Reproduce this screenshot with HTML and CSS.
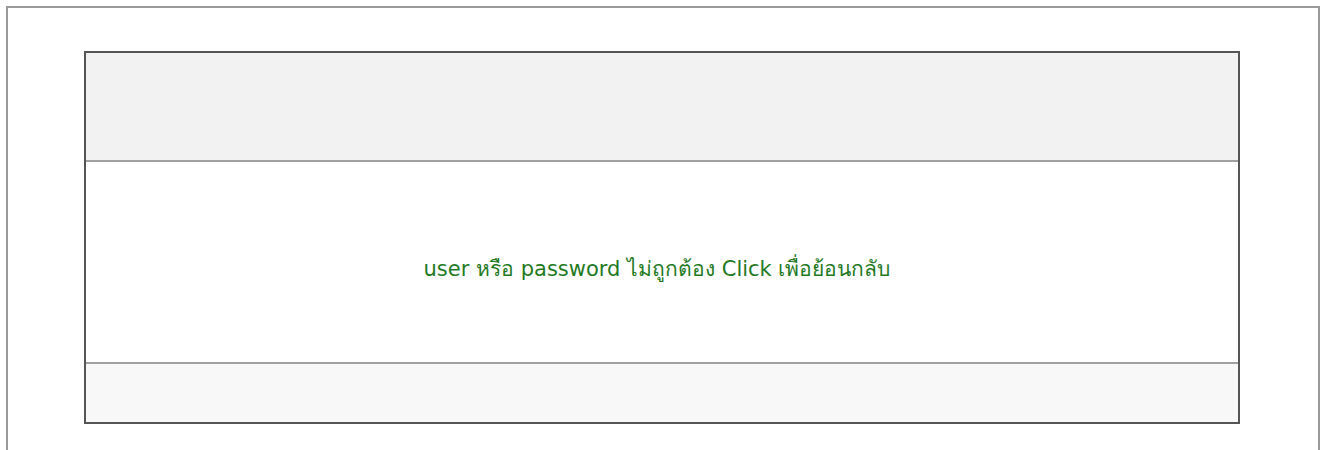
FILE: index.html
```html
<!DOCTYPE html>
<html lang="th">
<head>
<meta charset="utf-8">
<title>เข้าสู่ระบบ</title>
<link rel="stylesheet" href="styles.css">
</head>
<body>
<div class="frame">
  <div class="panel">
    <div class="panel-head"></div>
    <div class="panel-body">
      <a class="back-link" href="#">user หรือ password ไม่ถูกต้อง Click เพื่อย้อนกลับ</a>
    </div>
    <div class="panel-foot"></div>
  </div>
</div>
</body>
</html>
```
FILE: styles.css
```css
html, body {
  margin: 0;
  padding: 0;
  background: #ffffff;
}

body {
  padding: 6px 5px 0 6px;
  font-family: Tahoma, "DejaVu Sans", "Noto Sans", sans-serif;
}

.frame {
  border: 2px solid #9a9a9a;
  border-bottom: none;
  padding: 43px 78px 40px 76px;
}

.panel {
  border: 2px solid #555555;
  display: flex;
  flex-direction: column;
}

.panel-head {
  height: 107px;
  background: #f2f2f2;
  border-bottom: 2px solid #a0a0a0;
}

.panel-body {
  height: 202px;
  box-sizing: border-box;
  padding: 12px 10px 0 0;
  background: #ffffff;
  border-bottom: 2px solid #a0a0a0;
  display: flex;
  align-items: center;
  justify-content: center;
}

.panel-foot {
  height: 58px;
  background: #f8f8f8;
}

.back-link {
  color: #1f7a1f;
  text-decoration: none;
  font-size: 21px;
}
```
